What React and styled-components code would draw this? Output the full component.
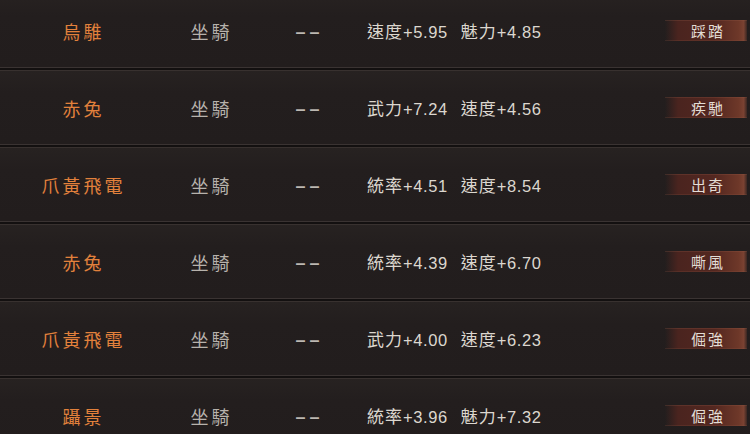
import React from 'react'
import styled, { createGlobalStyle } from 'styled-components'

const GlobalStyle = createGlobalStyle`
  html, body {
    margin: 0;
    padding: 0;
    background: #231e1e;
    overflow: hidden;
  }
  body {
    font-family: "Noto Sans CJK TC", "Noto Sans CJK SC", sans-serif;
  }
`

const Page = styled.div`
  width: 750px;
  height: 434px;
  overflow: hidden;
  background: #231e1e;
`

const List = styled.div`
  display: flex;
  flex-direction: column;
  margin-top: -6px;
`

const Row = styled.div`
  display: grid;
  grid-template-columns: 164px 92px 102px 1fr 82px;
  align-items: center;
  height: 73px;
  padding-right: 3px;
  background: linear-gradient(180deg, #272221 0%, #231e1e 30%, #221d1d 100%);
`

const Divider = styled.div`
  height: 4px;
  background: linear-gradient(
    180deg,
    #3a3332 0,
    #3a3332 1px,
    #131010 1px,
    #131010 3px,
    #38312f 3px,
    #38312f 4px
  );
`

const Name = styled.div`
  text-align: center;
  padding-left: 3px;
  font-size: 18px;
  font-weight: 400;
  letter-spacing: 3px;
  color: #e2813c;
`

const Kind = styled.div`
  text-align: center;
  padding-left: 3px;
  font-size: 18px;
  letter-spacing: 3px;
  color: #b7b2ac;
`

const Dash = styled.div`
  text-align: center;
  padding-left: 5px;
  padding-top: 3px;
  font-family: "Liberation Sans", sans-serif;
  font-size: 18px;
  font-weight: 700;
  letter-spacing: 4px;
  color: #bdb8b2;
`

const Stats = styled.div`
  display: flex;
  gap: 13px;
  padding-left: 9px;
  color: #dcd7cf;
  white-space: nowrap;
`

const Stat = styled.span`
  display: inline-flex;
  align-items: baseline;
`

const StatLabel = styled.span`
  font-size: 17px;
  letter-spacing: 1px;
`

const StatValue = styled.span`
  font-family: "Liberation Sans", sans-serif;
  font-size: 16.5px;
  letter-spacing: 0.6px;
`

const Badge = styled.div`
  height: 21px;
  display: flex;
  align-items: center;
  justify-content: center;
  padding-left: 4px;
  font-size: 15px;
  letter-spacing: 2px;
  color: #e3ddd5;
  background: linear-gradient(
    90deg,
    rgba(80, 36, 30, 0) 0%,
    #4a241f 16%,
    #532720 60%,
    #6e3829 90%,
    #7a4232 96%,
    rgba(110, 60, 45, 0.3) 100%
  );
  box-shadow: inset 0 1px 0 rgba(150, 90, 70, 0.25), inset 0 -1px 0 rgba(150, 90, 70, 0.2);
`

const mounts = [
  { name: '烏騅', stats: [['速度', '+5.95'], ['魅力', '+4.85']], skill: '踩踏' },
  { name: '赤兔', stats: [['武力', '+7.24'], ['速度', '+4.56']], skill: '疾馳' },
  { name: '爪黃飛電', stats: [['統率', '+4.51'], ['速度', '+8.54']], skill: '出奇' },
  { name: '赤兔', stats: [['統率', '+4.39'], ['速度', '+6.70']], skill: '嘶風' },
  { name: '爪黃飛電', stats: [['武力', '+4.00'], ['速度', '+6.23']], skill: '倔強' },
  { name: '躡景', stats: [['統率', '+3.96'], ['魅力', '+7.32']], skill: '倔強' },
]

export default function App() {
  return (
    <Page>
      <GlobalStyle />
      <List>
        {mounts.map((m, i) => (
          <React.Fragment key={i}>
            <Row>
              <Name>{m.name}</Name>
              <Kind>坐騎</Kind>
              <Dash>––</Dash>
              <Stats>
                {m.stats.map(([label, value]) => (
                  <Stat key={label}>
                    <StatLabel>{label}</StatLabel>
                    <StatValue>{value}</StatValue>
                  </Stat>
                ))}
              </Stats>
              <Badge>{m.skill}</Badge>
            </Row>
            {i < mounts.length - 1 && <Divider />}
          </React.Fragment>
        ))}
      </List>
    </Page>
  )
}
